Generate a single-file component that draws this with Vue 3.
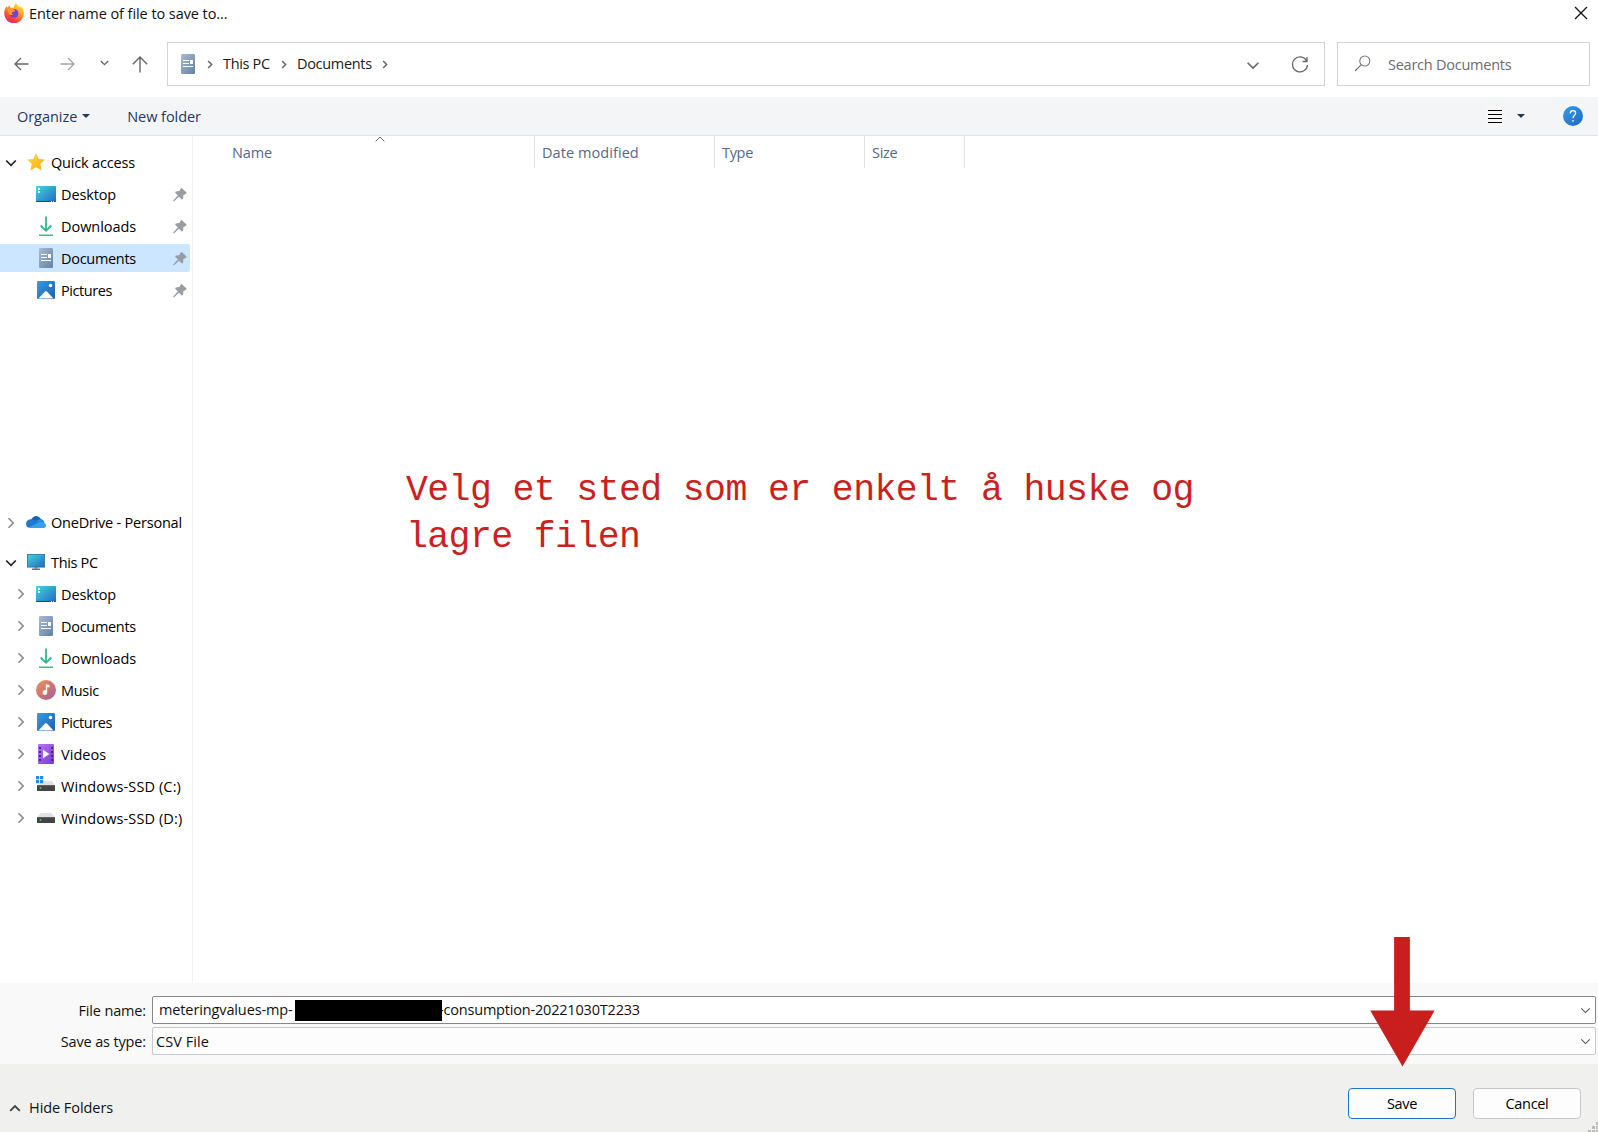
<script setup>
const quick = [
  { label: 'Desktop', icon: 'desktop', track: -0.12 },
  { label: 'Downloads', icon: 'download', track: -0.05 },
  { label: 'Documents', icon: 'document', track: -0.3, selected: true },
  { label: 'Pictures', icon: 'picture', track: -0.43 },
]
const pc = [
  { label: 'Desktop', icon: 'desktop', track: -0.12 },
  { label: 'Documents', icon: 'document', track: -0.3 },
  { label: 'Downloads', icon: 'download', track: -0.05 },
  { label: 'Music', icon: 'music', track: -0.3 },
  { label: 'Pictures', icon: 'picture', track: -0.43 },
  { label: 'Videos', icon: 'video', track: 0.05 },
  { label: 'Windows-SSD (C:)', icon: 'drive-c', track: 0.12 },
  { label: 'Windows-SSD (D:)', icon: 'drive', track: 0.12 },
]
</script>

<template>
  <svg class="defs" width="0" height="0" aria-hidden="true">
    <defs>
      <linearGradient id="g-desk" x1="0" y1="0" x2="1" y2="1"><stop offset="0" stop-color="#43d6e3" /><stop offset="1" stop-color="#2268bd" /></linearGradient>
      <linearGradient id="g-doc" x1="0" y1="0" x2="1" y2="1"><stop offset="0" stop-color="#a9bccf" /><stop offset="1" stop-color="#6480a3" /></linearGradient>
      <linearGradient id="g-pic" x1="0" y1="0" x2="1" y2="1"><stop offset="0" stop-color="#359ce4" /><stop offset="1" stop-color="#1c5dab" /></linearGradient>
      <linearGradient id="g-mus" x1="0" y1="0" x2="1" y2="1"><stop offset="0" stop-color="#f19458" /><stop offset=".55" stop-color="#cb7370" /><stop offset="1" stop-color="#a05cae" /></linearGradient>
      <linearGradient id="g-vid" x1="0" y1="0" x2="1" y2="1"><stop offset="0" stop-color="#b777f2" /><stop offset="1" stop-color="#7b38d8" /></linearGradient>
      <linearGradient id="g-star" x1="0" y1="0" x2="1" y2="1"><stop offset="0" stop-color="#ffda45" /><stop offset="1" stop-color="#f8ae12" /></linearGradient>
      <linearGradient id="g-help" x1="0" y1="0" x2="1" y2="1"><stop offset="0" stop-color="#35a0e6" /><stop offset="1" stop-color="#1f65c8" /></linearGradient>
      <linearGradient id="g-fox" x1=".8" y1="0" x2=".25" y2="1"><stop offset="0" stop-color="#fff04a" /><stop offset=".4" stop-color="#ff9b29" /><stop offset=".75" stop-color="#fb4440" /><stop offset="1" stop-color="#e5156f" /></linearGradient>
    </defs>
    <symbol id="i-desktop" viewBox="0 0 20 20"><rect y="2" width="20" height="16" rx="1" fill="url(#g-desk)" /><path d="M0 17h20q0 1-1 1H1q-1 0-1-1z" fill="#174a85" /><path d="M2 4h2v2H2zM2 7h2v2H2z" fill="#fff" /><path d="M15 17h1v1h-1zM17 17h1v1h-1z" fill="#bfe4ff" /></symbol>
    <symbol id="i-document" viewBox="0 0 20 20"><rect x="3" width="14" height="20" rx="1.2" fill="url(#g-doc)" /><path d="M5 6.500h6M5 9.500h6M5 12.500h10" stroke="#fff" /><path d="M12 6h3v4h-3z" fill="#fff" /></symbol>
    <symbol id="i-download" viewBox="0 0 20 20"><path d="M10 .5v14M4.700 9.500L10 14.800l5.300-5.300" fill="none" stroke="#2eb58e" stroke-width="1.800" /><path d="M3 18.500h14V20H3z" fill="#37bf89" /></symbol>
    <symbol id="i-picture" viewBox="0 0 20 20"><rect x="1" y="1" width="18" height="18" rx="1.200" fill="url(#g-pic)" /><path d="M2.500 18.500l6.500-7q1-1 2 0l6.500 7z" fill="#fff" /><circle cx="14.500" cy="5.500" r="1.700" fill="#fff" /></symbol>
    <symbol id="i-music" viewBox="0 0 20 20"><circle cx="10" cy="10" r="10" fill="url(#g-mus)" /><path d="M10 4.200l3.500.8v2.400L11.200 7v5.600a2.300 2.300 0 1 1-1.400-2.100V4.200z" fill="#fff" /></symbol>
    <symbol id="i-video" viewBox="0 0 20 20"><rect x="2" width="16" height="20" rx="1" fill="url(#g-vid)" /><path d="M4 3v15M16 3v15" stroke="#472183" stroke-width="1.800" stroke-dasharray="2 2" /><path d="M7 5.800l6.400 4.200L7 14.200z" fill="#fff" /></symbol>
    <symbol id="i-drive" viewBox="0 0 20 20"><path d="M5 5h10.500L19 9.500H1z" fill="#dfe1e5" /><rect x="1" y="9" width="18" height="6" rx=".6" fill="#444" /><path d="M1.300 9.600h17.400" stroke="#666" /><circle cx="4.500" cy="12" r=".9" fill="#35d84c" /></symbol>
    <symbol id="i-drive-c" viewBox="0 0 20 20"><path d="M7 5h9l3 4.500H1z" fill="#dfe1e5" /><rect x="1" y="9" width="18" height="6" rx=".6" fill="#444" /><path d="M1.300 9.600h17.400" stroke="#666" /><circle cx="4.500" cy="12" r=".9" fill="#35d84c" /><path d="M0 0h3.200v3.200H0zM4 0h3.200v3.200H4zM0 4h3.200v3.200H0zM4 4h3.200v3.200H4z" fill="#2589dc" /></symbol>
    <symbol id="i-pin" viewBox="0 0 14 14"><path d="M7.500.8q.8-1.300 1.800-.4l3.900 3.800q.9 1-.3 1.600l-2.600 1.500-.2 3.200q-.5 1.700-1.800.6L6 8.800 1.100 13.300H.2v-.9L4.900 7.600 2.600 5.200q-.9-1.300.6-1.700l3.200-.4z" fill="#969da5" /></symbol>
    <symbol id="i-right" viewBox="0 0 8 12"><path d="M1.500 1.200L6.200 6 1.500 10.800" fill="none" stroke="currentColor" stroke-width="var(--sw, 1.600)" /></symbol>
    <symbol id="i-down" viewBox="0 0 12 8"><path d="M1.200 1.500L6 6.300l4.800-4.800" fill="none" stroke="currentColor" stroke-width="var(--sw, 1.400)" /></symbol>
  </svg>

  <div class="dialog">
    <header class="titlebar">
      <svg class="fox" width="20" height="20" viewBox="0 0 20 20">
        <path d="M12.200 0c.7 2 2.300 2.700 3.800 4.300l1-1c1.800 2 2.900 4.500 2.800 7.200A9.800 9.800 0 0 1 .2 10.500C.2 7.300 1.200 5 2.700 3l.5 1.800L5.600 2l.7 2.500 3.400.2C10 3 10.700 1.300 12.200 0z" fill="url(#g-fox)" />
        <circle cx="10" cy="10.300" r="4.400" fill="#7542c8" />
        <path d="M3.500 6q2.500-2 5 .1l2.600.8q0 1.800-2.600 2-1.500 1.800.6 2.900-3.300 1-4.500-1.600z" fill="#ff9a30" />
      </svg>
      <span class="title">Enter name of file to save to...</span>
      <svg class="close" width="14" height="14" viewBox="0 0 14 14"><path d="M1 1l12 12M13 1L1 13" stroke="#111" stroke-width="1.300" /></svg>
    </header>

    <nav class="navrow">
      <div class="arrows">
        <svg width="15" height="14" viewBox="0 0 15 14"><path d="M14.500 7H1.200M7 1L1 7l6 6" fill="none" stroke="#666" stroke-width="1.300" /></svg>
        <svg width="15" height="14" viewBox="0 0 15 14"><path d="M.5 7h13.300M8 1l6 6-6 6" fill="none" stroke="#a3a3a3" stroke-width="1.300" /></svg>
        <svg width="9" height="6" viewBox="0 0 9 6"><path d="M.8 1l3.700 3.700L8.200 1" fill="none" stroke="#666" stroke-width="1.300" /></svg>
        <svg width="16" height="17" viewBox="0 0 16 17"><path d="M8 16.500V1.200M.8 8.300L8 1.100l7.200 7.200" fill="none" stroke="#666" stroke-width="1.400" /></svg>
      </div>
      <div class="address">
        <svg class="doc" width="20" height="20"><use href="#i-document" /></svg>
        <svg class="sep" width="6" height="9"><use href="#i-right" /></svg>
        <span class="crumb pc">This PC</span>
        <svg class="sep" width="6" height="9"><use href="#i-right" /></svg>
        <span class="crumb docs">Documents</span>
        <svg class="sep" width="6" height="9"><use href="#i-right" /></svg>
        <svg class="drop" width="14" height="9"><use href="#i-down" /></svg>
        <svg class="refresh" width="18" height="18" viewBox="0 0 18 18"><path d="M15.500 4.600A7.500 7.500 0 1 0 16.500 9M16 1v4.500h-4.500" fill="none" stroke="#666" stroke-width="1.300" /></svg>
      </div>
      <div class="search">
        <svg width="17" height="17" viewBox="0 0 17 17"><circle cx="10.800" cy="6" r="5" fill="none" stroke="#777" stroke-width="1.100" /><path d="M7.300 9.700L1 16" stroke="#777" stroke-width="1.200" /></svg>
        <span>Search Documents</span>
      </div>
    </nav>

    <div class="toolbar">
      <span class="organize">Organize</span><i class="caret"></i>
      <span class="newfolder">New folder</span>
      <svg class="lines" width="20" height="20" viewBox="0 0 20 20"><path fill="#f7f7f7" d="M0 0h20v20H0z" /><path d="M3 4.500h14M3 8.500h14M3 12.500h14M3 16.500h14" stroke="#000" /></svg>
      <i class="caret view"></i>
      <svg class="help" width="20" height="20" viewBox="0 0 20 20"><circle cx="10" cy="10" r="10" fill="url(#g-help)" /><path d="M7.300 7.400Q7.400 4.700 10 4.700q2.600 0 2.600 2.400 0 1.300-1.300 2.300T10 12.200" fill="none" stroke="#fff" stroke-width="1.300" /><circle cx="10" cy="14.800" r=".9" fill="#fff" /></svg>
    </div>

    <main class="body">
      <aside class="tree">
        <div class="row top">
          <svg class="open" width="12" height="8"><use href="#i-down" /></svg>
          <svg class="ico" width="20" height="20" viewBox="0 0 20 20"><path d="M10 1l2.700 5.900 6.300.7-4.700 4.300 1.300 6.500L10 15.300l-5.600 3.100 1.300-6.500L1 7.600l6.300-.7z" fill="url(#g-star)" /></svg>
          <span class="quick">Quick access</span>
        </div>
        <div v-for="q in quick" :key="q.label" class="row child" :class="{ selected: q.selected }">
          <svg class="ico" width="20" height="20"><use :href="'#i-' + q.icon" /></svg>
          <span :style="{ letterSpacing: q.track + 'px' }">{{ q.label }}</span>
          <svg class="pin" width="14" height="14"><use href="#i-pin" /></svg>
        </div>
        <div class="row top onedrive">
          <svg class="shut" width="8" height="12"><use href="#i-right" /></svg>
          <svg class="ico" width="20" height="20" viewBox="0 0 20 20"><path d="M5 8C6.500 4 11.500 1.800 15 7l-4.500 5z" fill="#1765b5" /><path d="M14 7q4-.2 4.500 4.500L13 14 8.500 9.500z" fill="#258cdc" /><path d="M4.500 7.200Q8 6.700 13 11l-8.700 4.800Q0 15.500 0 11.700 .2 8 4.500 7.200z" fill="#2179cf" /><path d="M3 15.300l9.500-4.800q2.500-1.200 5 .2 2.500.5 2.500 2.500 0 2.800-3 2.800H4.500q-1 0-1.500-.7z" fill="#38a0e8" /></svg>
          <span class="od">OneDrive - Personal</span>
        </div>
        <div class="row top thispc">
          <svg class="open" width="12" height="8"><use href="#i-down" /></svg>
          <svg class="ico" width="20" height="20" viewBox="0 0 20 20"><path d="M8.500 15h3v2h-3z" fill="#9aa3ad" /><path d="M6 16.500h8V18H6z" fill="#68737f" /><rect x="1.400" y="2.400" width="17.200" height="12.700" fill="url(#g-desk)" stroke="#24729e" stroke-width=".8" /></svg>
          <span>This PC</span>
        </div>
        <div v-for="p in pc" :key="p.label" class="row child expandable">
          <svg class="shut" width="8" height="12"><use href="#i-right" /></svg>
          <svg class="ico" width="20" height="20"><use :href="'#i-' + p.icon" /></svg>
          <span :style="{ letterSpacing: p.track + 'px' }">{{ p.label }}</span>
        </div>
      </aside>

      <section class="files">
        <div class="columns">
          <div class="col name">Name
            <svg class="sort" width="10" height="6" viewBox="0 0 10 6"><path d="M.7 5.300L5 1l4.300 4.300" fill="none" stroke="#666" /></svg>
          </div>
          <div class="col date">Date modified</div>
          <div class="col type">Type</div>
          <div class="col size">Size</div>
        </div>
        <p class="note">Velg et sted som er enkelt å huske og<br />lagre filen</p>
      </section>
    </main>

    <section class="form">
      <div class="field">
        <label>File name:</label>
        <div class="input strong">
          <span class="f1">meteringvalues-mp-</span><i class="redacted"></i><span class="f2">-consumption-20221030T2233</span>
          <svg class="chev" width="11" height="7"><use href="#i-down" /></svg>
        </div>
      </div>
      <div class="field">
        <label>Save as type:</label>
        <div class="input">
          <span class="csv">CSV File</span>
          <svg class="chev" width="11" height="7"><use href="#i-down" /></svg>
        </div>
      </div>
    </section>

    <footer class="footer">
      <svg class="up" width="12" height="8" viewBox="0 0 12 8"><path d="M1.200 6.800L6 2l4.800 4.800" fill="none" stroke="#444" stroke-width="1.900" /></svg>
      <span class="hide">Hide Folders</span>
      <button class="btn primary">Save</button>
      <button class="btn">Cancel</button>
      <svg class="grip" width="10" height="10" viewBox="0 0 10 10"><path d="M8 0h2.500v3H8zM4 4h3v3H4zM8 4h2.500v3H8zM0 8h3v3H0zM4 8h3v3H4zM8 8h2.500v3H8z" fill="#bbb" /></svg>
    </footer>

    <svg class="pointer" width="66" height="131" viewBox="0 0 66 131"><path d="M24.100 0h15.800v73.600h24.700L32.500 129.600 .3 73.600h23.800z" fill="#c81e1e" /></svg>
  </div>
</template>

<style>
body { background: #fff; overflow: hidden; }
</style>

<style scoped>
.defs { position: absolute; }
.dialog {
  position: relative;
  display: flex;
  flex-direction: column;
  width: 1598px;
  height: 1132px;
  overflow: hidden;
  background: #fff;
  font-family: "Open Sans", "Noto Sans", sans-serif;
  font-size: 14.5px;
  letter-spacing: -0.32px;
  line-height: 20px;
  color: #111;
  white-space: nowrap;
}
svg { display: block; flex: none; }

.titlebar { display: flex; align-items: center; height: 27px; padding: 0 10px 0 4px; }
.fox { margin-top: -1px; }
.title { margin-left: 5px; letter-spacing: -0.07px; }
.close { margin: -1px 0 0 auto; }

.navrow { display: flex; align-items: center; height: 70px; box-sizing: border-box; padding: 4px 8px 0 14px; }
.arrows { display: flex; align-items: center; width: 153px; flex: none; }
.arrows svg:nth-child(2) { margin-left: 31px; }
.arrows svg:nth-child(3) { margin-left: 25px; margin-top: -2px; }
.arrows svg:nth-child(4) { margin-left: 23px; }
.address { display: flex; align-items: center; box-sizing: border-box; width: 1158px; height: 44px; border: 1px solid #d4d4d4; padding: 0 15px 0 10px; color: #666; }
.address .sep { margin-left: 9px; --sw: 2; }
.crumb { color: #1a1a1a; }
.address .pc { margin-left: 10px; width: 49px; }
.address .docs { margin-left: 10px; width: 76px; }
.drop { margin: 2px 0 0 auto; }
.refresh { margin: 2px 0 0 31px; }
.search { display: flex; align-items: center; box-sizing: border-box; width: 253px; height: 44px; margin-left: 12px; border: 1px solid #d4d4d4; padding-left: 16px; color: #6c6c6c; }
.search span { margin-left: 17px; padding-top: 2px; letter-spacing: -0.24px; }
.search svg { margin-top: -1px; }

.toolbar { display: flex; align-items: center; height: 39px; box-sizing: border-box; padding: 0 15px 0 17px; background: #f4f5f7; border-bottom: 1px solid #e3e4e6; color: #1f3863; letter-spacing: -0.05px; }
.toolbar span { padding-top: 2px; }
.caret { width: 0; height: 0; margin-left: 5px; border: 4px solid transparent; border-top-color: #1f3863; border-bottom: 0; }
.newfolder { margin-left: 37px; }
.lines { margin-left: auto; }
.caret.view { margin-left: 12px; margin-right: 38px; }

.body { display: flex; height: 847px; }
.tree { width: 192px; flex: none; border-right: 1px solid #f2f2f2; padding-top: 10px; color: #000; }
.row { display: flex; align-items: center; height: 32px; }
.row.top .ico { margin-left: 9px; }
.row.top .open { margin: 1px 0 0 5px; color: #222; --sw: 1.7; }
.row.top .shut { margin: 1px 0 0 7px; }
.row.top .shut + .ico { margin-left: 11px; }
.row span { margin-left: 5px; padding-top: 2px; }
.row .quick { letter-spacing: -0.18px; }
.row .od { letter-spacing: -0.22px; }
.shut { color: #8a8a8a; }
.row.child { padding-left: 36px; width: 154px; }
.row.expandable { padding-left: 17px; }
.row.child .shut + .ico { margin-left: 11px; }
.pin { margin: 1px 3px 0 auto; }
.row.selected { height: 28px; margin: 2px 0; background: #cce6ff; border-radius: 0 2px 2px 0; }
.onedrive { margin-top: 200px; }
.thispc { margin-top: 8px; }

.files { flex: 1; }
.columns { display: flex; height: 33px; padding-left: 31px; color: #56688a; }
.col { position: relative; box-sizing: border-box; border-right: 1px solid #e2e2e2; padding: 7px 0 0 7px; height: 32px; }
.col.name { width: 311px; padding-left: 8px; letter-spacing: -0.1px; }
.col.date { width: 180px; letter-spacing: 0.07px; }
.col.type { width: 150px; }
.col.size { width: 100px; }
.sort { position: absolute; left: 151px; top: 0; }
.note { margin: 298px 0 0 213px; font-family: "Liberation Mono", monospace; font-size: 36.5px; letter-spacing: -0.61px; line-height: 47px; color: #cc1f1f; }

.form { display: flex; flex-direction: column; height: 81px; box-sizing: border-box; padding: 13px 2px 0 0; gap: 3px; background: #f9f9f9; }
.field { display: flex; align-items: center; }
.field label { width: 146px; margin-right: 6px; padding-top: 2px; text-align: right; letter-spacing: -0.15px; }
.input { display: flex; flex: 1; align-items: center; box-sizing: border-box; height: 28px; border: 1px solid #c8c8c8; border-radius: 2px; background: #fdfdfd; padding: 0 4px 0 3px; }
.input.strong { border-color: #868686; background: #fff; padding-left: 6px; }
.f1 { width: 136px; flex: none; letter-spacing: -0.12px; }
.redacted { width: 147px; height: 21px; background: #000; position: relative; z-index: 1; }
.f2 { margin-left: -3px; letter-spacing: -0.19px; }
.csv { padding-top: 2px; letter-spacing: 0.05px; }
.chev { margin-left: auto; color: #555; --sw: 1.2; }

.footer { position: relative; display: flex; align-items: center; height: 68px; box-sizing: border-box; padding: 0 17px 0 9px; background: #f0f0ef; }
.up { margin-top: 20px; }
.hide { margin: 20px auto 0 8px; letter-spacing: -0.06px; }
.btn { box-sizing: border-box; width: 108px; height: 31px; margin: 10px 0 0 17px; padding: 2px 0 0; border: 1px solid #c8c8c8; border-radius: 4px; background: #fdfdfd; font: inherit; line-height: 20px; letter-spacing: inherit; color: #000; }
.btn.primary { border-color: #1f74c9; }
.grip { position: absolute; right: 0; bottom: 0; }
.pointer { position: absolute; left: 1370px; top: 937px; }
</style>
